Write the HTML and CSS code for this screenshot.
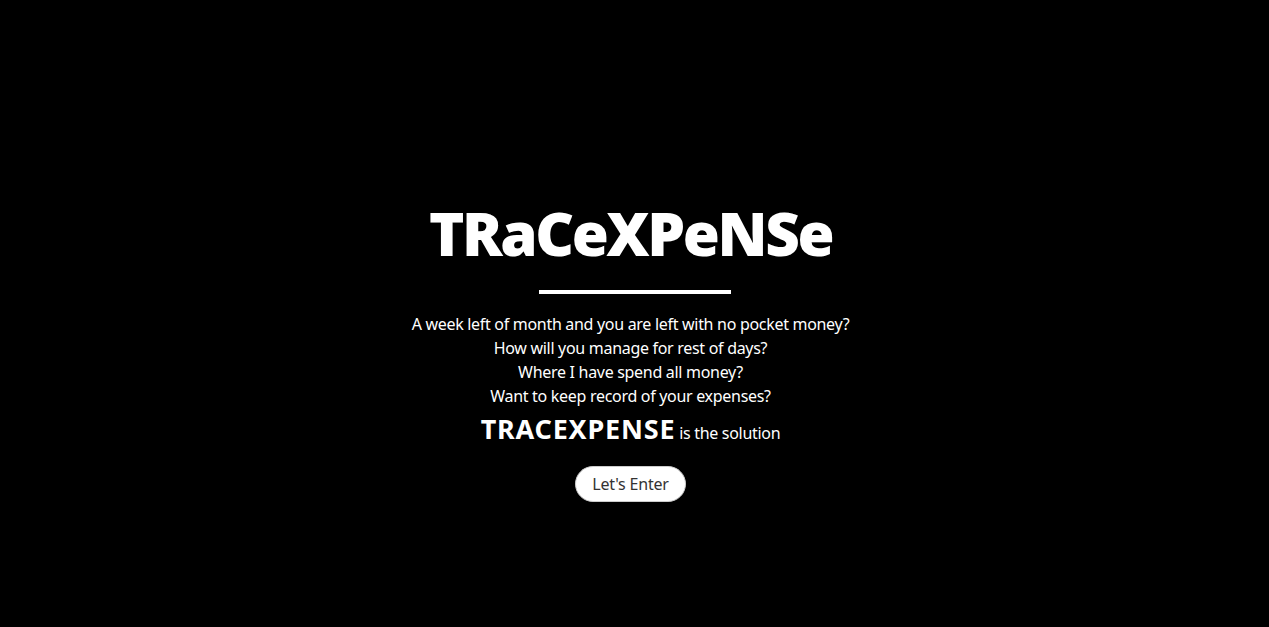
FILE: index.html
```html
<!DOCTYPE html>
<html lang="en">
<head>
<meta charset="utf-8">
<title>TRaCeXPeNSe</title>
<link rel="stylesheet" href="styles.css">
</head>
<body>
<main class="hero">
  <h1 class="title">TRaCeXPeNSe</h1>
  <div class="rule"></div>
  <p class="line">A week left of month and you are left with no pocket money?</p>
  <p class="line">How will you manage for rest of days?</p>
  <p class="line">Where I have spend all money?</p>
  <p class="line">Want to keep record of your expenses?</p>
  <p class="solution"><span class="brand">TRACEXPENSE</span> is the solution</p>
  <button class="enter">Let's Enter</button>
</main>
</body>
</html>
```
FILE: styles.css
```css
html, body {
  margin: 0;
  padding: 0;
  background: #000;
  color: #fff;
}
body {
  font-family: "Noto Sans", "Open Sans", sans-serif;
  font-size: 16px;
  height: 627px;
}
.hero {
  display: flex;
  flex-direction: column;
  align-items: center;
  padding-top: 193px;
  padding-right: 8px;
}
.title {
  margin: 0;
  font-family: "Open Sans", "Noto Sans", sans-serif;
  font-weight: 800;
  font-size: 60px;
  line-height: 80px;
  letter-spacing: -2.4px;
}
.rule {
  width: 192px;
  height: 4px;
  background: #fff;
  margin: 17px 0 18px 8px;
}
.line {
  margin: 0;
  line-height: 24px;
  font-size: 16px;
  letter-spacing: -0.3px;
}
.solution {
  margin: 6px 0 0;
  line-height: 30px;
  letter-spacing: -0.3px;
}
.brand {
  font-size: 27px;
  font-weight: 700;
  letter-spacing: 0.8px;
}
.enter {
  margin-top: 18px;
  width: 111px;
  height: 36px;
  border-radius: 18px;
  border: 1px solid #ccc;
  background: #fff;
  color: #333;
  font-family: inherit;
  font-size: 16px;
  letter-spacing: -0.2px;
}
```
